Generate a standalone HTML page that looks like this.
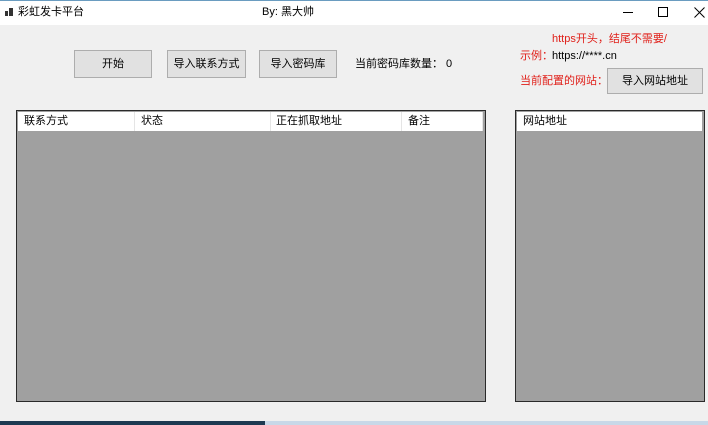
<!DOCTYPE html>
<html><head><meta charset="utf-8"><style>
*{margin:0;padding:0;box-sizing:border-box}
body{width:708px;height:425px;background:#f0f0f0;position:relative;overflow:hidden;font-family:"Liberation Sans","Noto Sans CJK SC",sans-serif;font-size:11px;color:#000;line-height:14px}
.a{position:absolute;white-space:nowrap}
.tb{left:0;top:0;width:708px;height:25px;background:#fff;border-top:1px solid #6a9cc0}
.btn{position:absolute;background:#e1e1e1;border:1px solid #adadad;text-align:center;font-size:11px}
.grid{position:absolute;background:#a0a0a0;border:1px solid #2a2a2a}
.hd{position:absolute;left:1px;top:1px;height:19px;background:#fff;font-size:11px}
.hd span{position:absolute;top:3px}
.hd i{position:absolute;top:0;width:1px;height:19px;background:#e5e5e5}
.red{color:#e0201a;font-size:11px}
</style></head><body>
<div class="a tb"></div>
<svg class="a" style="left:5px;top:8px" width="9" height="9"><rect x="0" y="3" width="3" height="5" fill="#333"/><rect x="4" y="0" width="4" height="8" fill="#333"/></svg>
<div class="a" style="left:18px;top:5px">彩虹发卡平台</div>
<div class="a" style="left:262px;top:5px">By: 黑大帅</div>
<div class="a" style="left:623px;top:12px;width:10px;height:1px;background:#000"></div>
<div class="a" style="left:658px;top:7px;width:10px;height:10px;border:1px solid #000"></div>
<svg class="a" style="left:694px;top:7px" width="11" height="11"><path d="M0.5 0.5L10.5 10.5M10.5 0.5L0.5 10.5" stroke="#000" stroke-width="1"/></svg>

<div class="btn" style="left:74px;top:50px;width:78px;height:28px;line-height:26px">开始</div>
<div class="btn" style="left:167px;top:50px;width:79px;height:28px;line-height:26px">导入联系方式</div>
<div class="btn" style="left:259px;top:50px;width:78px;height:28px;line-height:26px">导入密码库</div>
<div class="a" style="left:355px;top:57px">当前密码库数量： 0</div>

<div class="a red" style="left:552px;top:32px">https开头，结尾不需要/</div>
<div class="a red" style="left:520px;top:49px">示例：</div>
<div class="a" style="left:552px;top:49px">https://****.cn</div>
<div class="a red" style="left:520px;top:74px">当前配置的网站：</div>
<div class="btn" style="left:607px;top:68px;width:96px;height:26px;line-height:24px">导入网站地址</div>

<div class="grid" style="left:16px;top:110px;width:470px;height:292px">
<div class="hd" style="width:465px"><span style="left:6px;top:2px">联系方式</span><i style="left:116px"></i><span style="left:123px;top:2px">状态</span><i style="left:252px"></i><span style="left:258px;top:2px">正在抓取地址</span><i style="left:383px"></i><span style="left:390px;top:2px">备注</span><i style="left:464px"></i></div>
</div>
<div class="grid" style="left:515px;top:110px;width:190px;height:292px">
<div class="hd" style="width:185px"><span style="left:6px;top:2px">网站地址</span></div>
</div>
<div class="a" style="left:0;top:421px;width:265px;height:4px;background:#1d3a52"></div>
<div class="a" style="left:265px;top:421px;width:443px;height:4px;background:#c8d8e8"></div>
</body></html>
